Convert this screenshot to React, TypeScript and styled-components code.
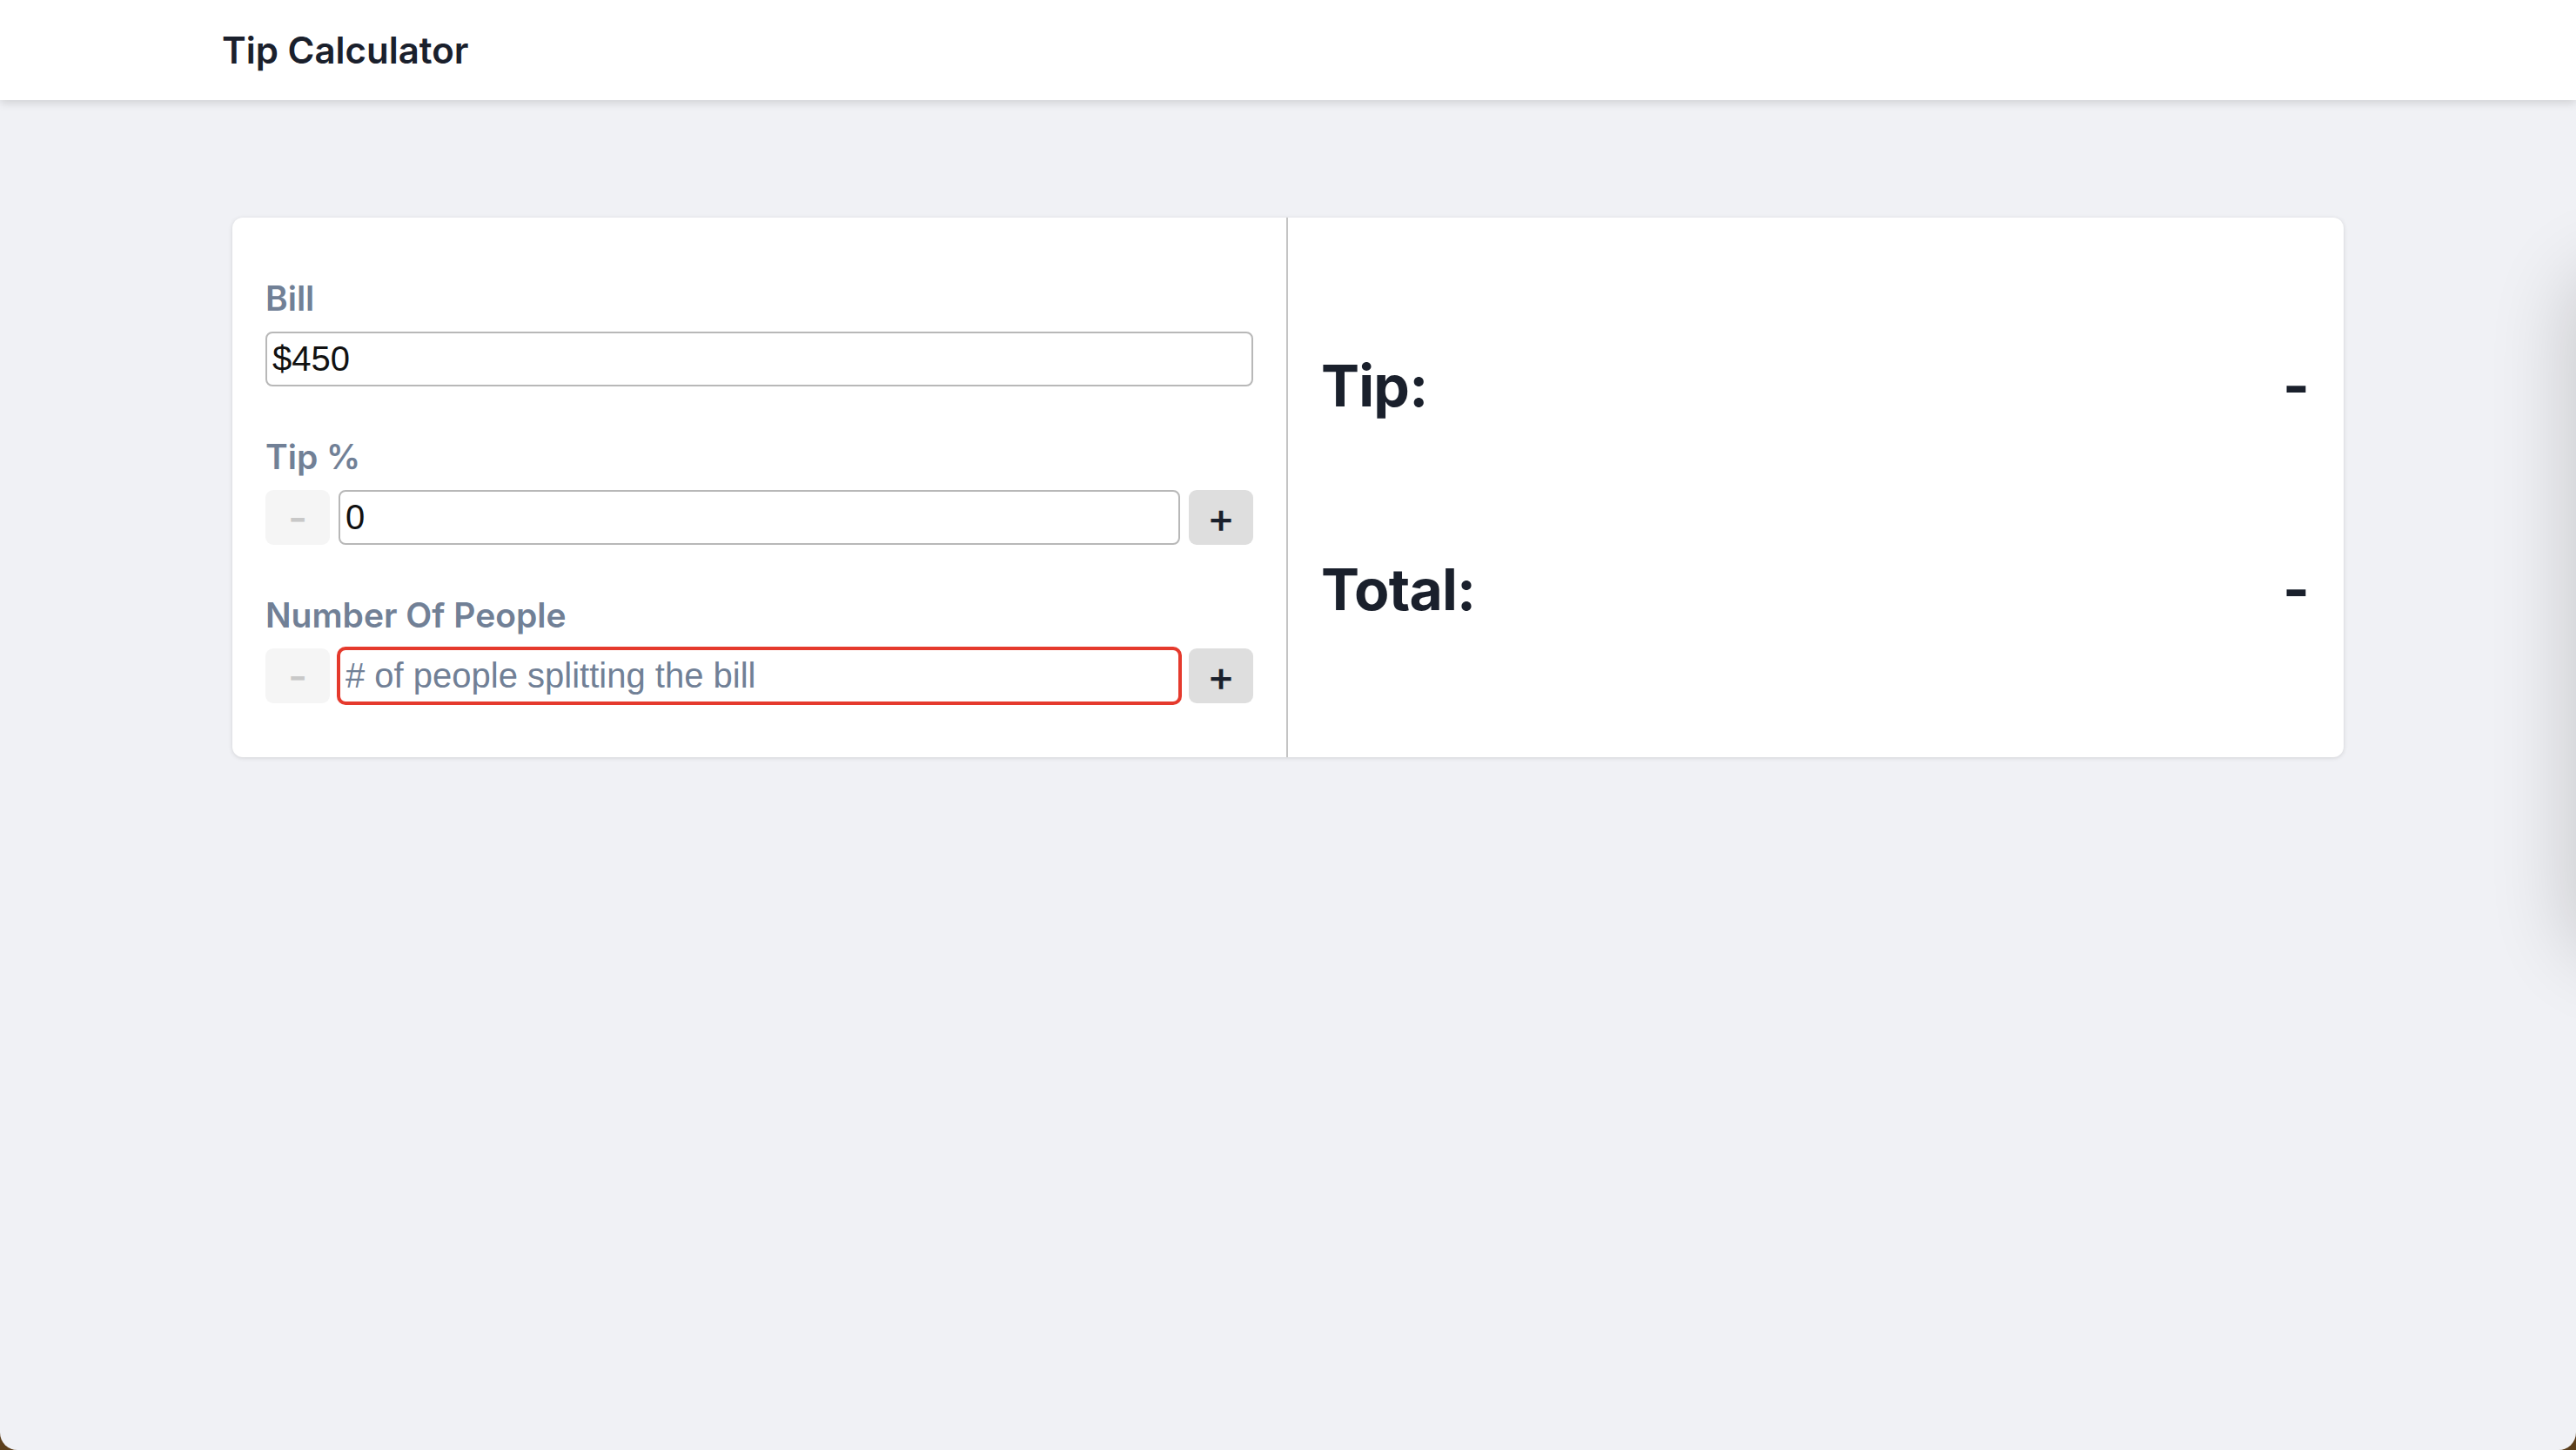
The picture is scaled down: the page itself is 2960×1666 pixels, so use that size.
import React from "react";
import styled, { createGlobalStyle } from "styled-components";

const GlobalStyle = createGlobalStyle`
  html, body {
    margin: 0;
    padding: 0;
    background: #5c3f1c;
  }
  body {
    font-family: Inter, "Noto Sans", sans-serif;
    overflow: hidden;
  }
  * { box-sizing: border-box; }
`;

const Window = styled.div`
  position: relative;
  min-height: 100vh;
  background: #f0f1f5;
  border-bottom-left-radius: 20px;
  border-bottom-right-radius: 20px;
  overflow: hidden;
`;

const Header = styled.header`
  height: 115px;
  background: #ffffff;
  display: flex;
  align-items: center;
  padding-left: 255px;
  box-shadow: 0 3px 10px rgba(0, 0, 0, 0.14);
  position: relative;
  z-index: 1;
`;

const Title = styled.h1`
  margin: 0;
  font-family: Inter, sans-serif;
  font-size: 42px;
  font-weight: 600;
  color: #1a202c;
  letter-spacing: 0;
`;

const Main = styled.main`
  padding: 135px 267px 0;
`;

const Card = styled.section`
  display: grid;
  grid-template-columns: 1fr 1fr;
  background: #ffffff;
  border-radius: 12px;
  box-shadow: 0 1px 5px rgba(0, 0, 0, 0.13);
`;

const InputPane = styled.div`
  display: flex;
  flex-direction: column;
  gap: 58px;
  padding: 70px 38px 62px;
  border-right: 2px solid #c4c4c4;
`;

const Field = styled.div`
  display: flex;
  flex-direction: column;
  gap: 15px;
`;

const Label = styled.label`
  font-family: Inter, sans-serif;
  font-size: 39px;
  line-height: 46px;
  font-weight: 600;
  color: #718096;
`;

const Row = styled.div`
  display: flex;
  align-items: stretch;
  gap: 10px;
  height: 63px;
`;

const TextInput = styled.input<{ $invalid?: boolean }>`
  flex: 1 1 auto;
  min-width: 0;
  width: 100%;
  height: 63px;
  padding: 0 6px;
  font-family: "Liberation Sans", Arial, sans-serif;
  font-size: 40px;
  color: #111111;
  background: #ffffff;
  border: 2px solid ${(p) => (p.$invalid ? "#e53a2d" : "#b8b8b8")};
  border-radius: 8px;
  outline: none;
  box-shadow: ${(p) => (p.$invalid ? "0 0 0 2px #e53a2d" : "none")};
  &::placeholder {
    color: #718096;
  }
`;

const StepButton = styled.button<{ $disabled?: boolean }>`
  flex: 0 0 74px;
  height: 63px;
  border: none;
  border-radius: 9px;
  padding: 0;
  display: flex;
  align-items: center;
  justify-content: center;
  font-family: Inter, sans-serif;
  font-size: 48px;
  font-weight: 500;
  line-height: 1;
  background: ${(p) => (p.$disabled ? "#f5f5f5" : "#dedede")};
  color: ${(p) => (p.$disabled ? "#c8c8c8" : "#1a202c")};
  cursor: pointer;
`;

const ResultPane = styled.div`
  display: flex;
  flex-direction: column;
  justify-content: space-evenly;
  padding: 0 40px 0 38px;
`;

const ResultRow = styled.div`
  display: flex;
  justify-content: space-between;
  align-items: baseline;
  font-family: Inter, sans-serif;
  font-size: 66px;
  line-height: 80px;
  font-weight: 700;
  letter-spacing: -0.8px;
  color: #1a202c;
`;

const EdgeShadow = styled.div`
  position: absolute;
  top: 320px;
  right: -300px;
  width: 300px;
  height: 770px;
  border-radius: 40px;
  box-shadow: 0 0 90px 10px rgba(0, 0, 0, 0.16);
`;

export default function App() {
  return (
    <>
      <GlobalStyle />
      <Window>
        <Header>
          <Title>Tip Calculator</Title>
        </Header>
        <Main>
          <Card>
            <InputPane>
              <Field>
                <Label htmlFor="bill">Bill</Label>
                <TextInput id="bill" defaultValue="$450" />
              </Field>
              <Field>
                <Label htmlFor="tip">Tip %</Label>
                <Row>
                  <StepButton $disabled>-</StepButton>
                  <TextInput id="tip" defaultValue="0" />
                  <StepButton>+</StepButton>
                </Row>
              </Field>
              <Field>
                <Label htmlFor="people">Number Of People</Label>
                <Row>
                  <StepButton $disabled>-</StepButton>
                  <TextInput
                    id="people"
                    $invalid
                    placeholder="# of people splitting the bill"
                  />
                  <StepButton>+</StepButton>
                </Row>
              </Field>
            </InputPane>
            <ResultPane>
              <ResultRow>
                <span>Tip:</span>
                <span>-</span>
              </ResultRow>
              <ResultRow>
                <span>Total:</span>
                <span>-</span>
              </ResultRow>
            </ResultPane>
          </Card>
        </Main>
        <EdgeShadow />
      </Window>
    </>
  );
}
